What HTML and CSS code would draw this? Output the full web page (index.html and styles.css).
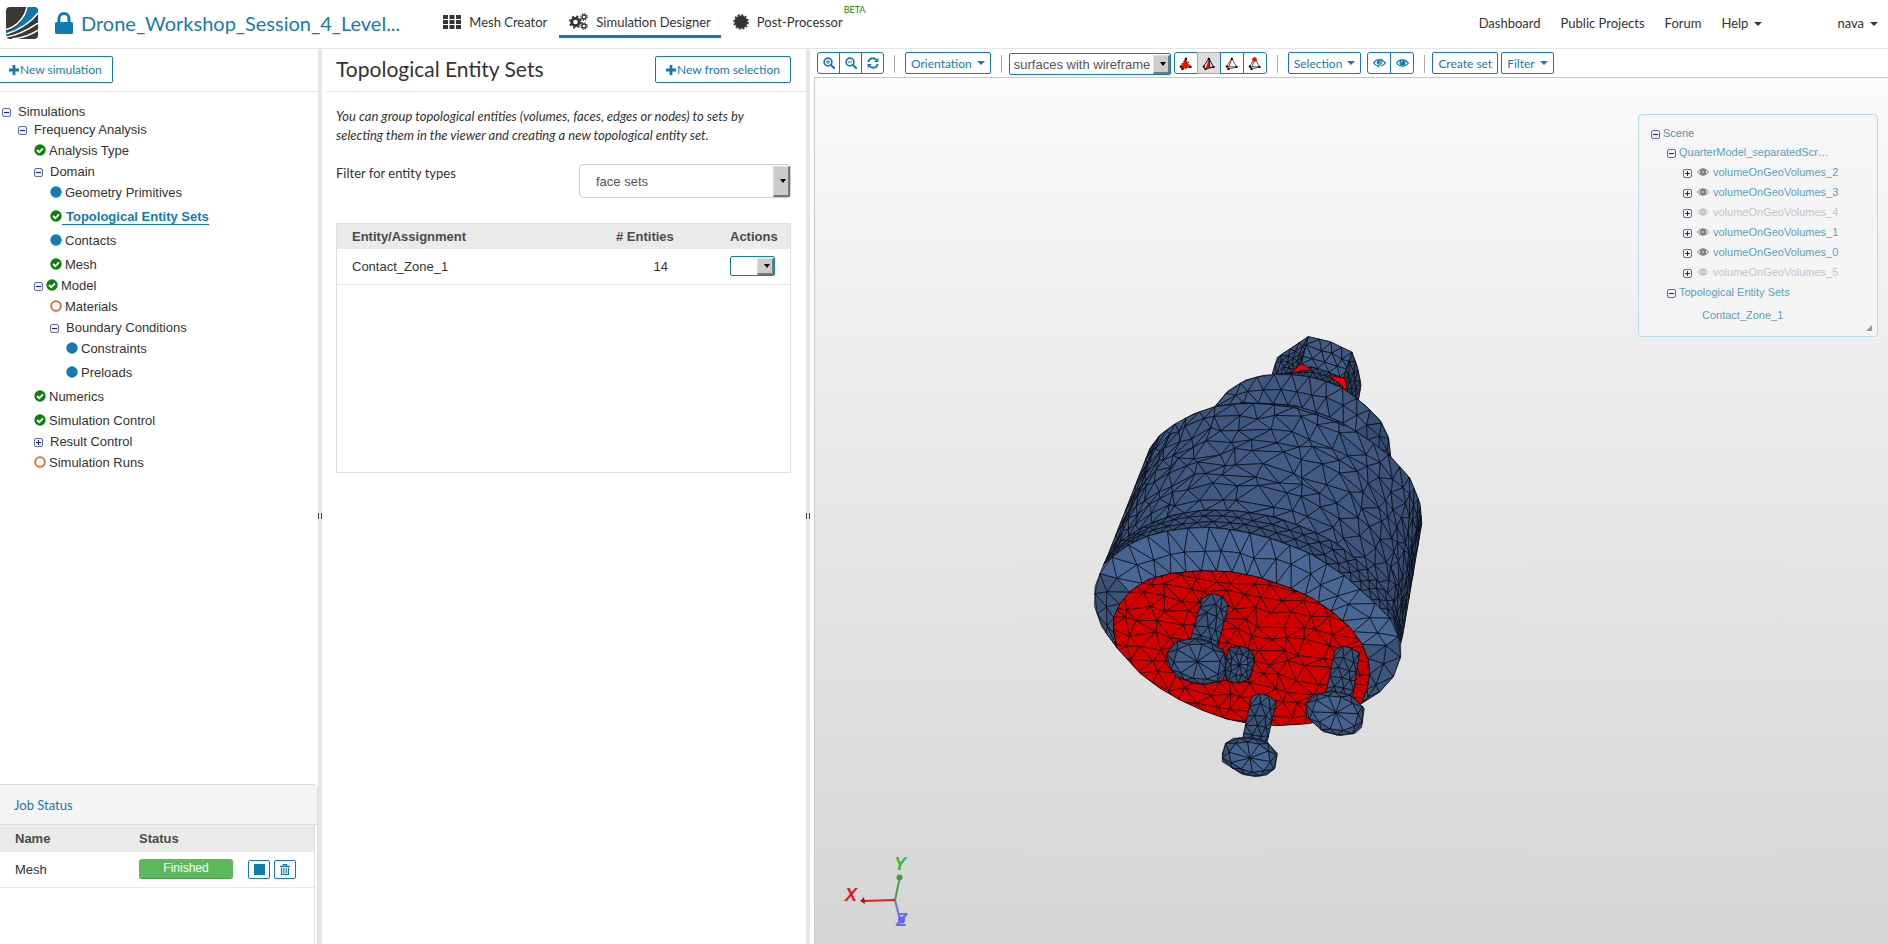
FILE: index.html
```html
<!DOCTYPE html>
<html lang="en">

<head>
    <meta charset="utf-8">
    <meta name="viewport" content="width=device-width, initial-scale=1.0">
    <title>Simulation Designer</title>
    <link rel="stylesheet" href="styles.css">
</head>

<body>
    <!-- icon sprite -->
    <svg class="sprite" aria-hidden="true">
        <symbol id="minus" viewBox="0 0 9 9">
            <rect x=".5" y=".5" width="8" height="8" rx="1.5" fill="#f4f4fa" stroke="#5f6cb0" />
            <path d="M2 4.5h5" stroke="#1414c8" />
        </symbol>
        <symbol id="plus" viewBox="0 0 9 9">
            <rect x=".5" y=".5" width="8" height="8" rx="1.5" fill="#f4f4fa" stroke="#5f6cb0" />
            <path d="M2 4.5h5M4.5 2v5" stroke="#1414c8" />
        </symbol>
        <symbol id="ok" viewBox="0 0 12 12">
            <circle cx="6" cy="6" r="5.7" fill="#0a820a" />
            <path d="M3 6l2.2 2.2L9 4.4" fill="none" stroke="#fff" stroke-width="1.9" />
        </symbol>
        <symbol id="dot" viewBox="0 0 12 12">
            <circle cx="6" cy="6" r="5.7" fill="#147bb0" />
        </symbol>
        <symbol id="ring" viewBox="0 0 12 12">
            <circle cx="6" cy="6" r="4.8" fill="#fff" stroke="#e4602f" stroke-width="1.8" />
        </symbol>
        <symbol id="add" viewBox="0 0 10 10">
            <path d="M3.6 0h2.8v3.6H10v2.8H6.4V10H3.6V6.4H0V3.6h3.6z" fill="currentColor" />
        </symbol>
        <symbol id="eye" viewBox="0 0 14 10">
            <path d="M.7 5C3.8.4 10.2.4 13.3 5 10.2 9.6 3.8 9.6.7 5z" fill="none" stroke="currentColor" stroke-width="1.3" />
            <circle cx="7" cy="4.6" r="3.2" fill="currentColor" />
            <path d="M5.4 4.5A1.6 1.6 0 0 1 7 2.9" fill="none" stroke="#fff" stroke-width=".8" />
        </symbol>
        <symbol id="eye-off" viewBox="0 0 14 10">
            <path d="M5.5 8.3C3.5 7.8 1.8 6.6.7 5 2.8 1.9 6 .9 9 1.8M9.6 2.1C11 2.7 12.3 3.7 13.3 5c-1.2 1.7-2.9 2.9-4.9 3.3" fill="none" stroke="currentColor" stroke-width="1.4" />
            <path d="M4 4.5A2.9 2.9 0 0 1 8 1.9L5.7 6.9A2.9 2.9 0 0 1 4 4.5zM9.7 3.7a2.7 2.7 0 0 1-1.9 3.4z" fill="currentColor" />
            <path d="M9.9.3L5.6 9.7" stroke="currentColor" stroke-width="1.3" />
        </symbol>
        <symbol id="tree-eye" viewBox="0 0 12 8">
            <path d="M.5 4C3.2-.2 8.8-.2 11.5 4 8.8 8.2 3.2 8.2.5 4z" fill="none" stroke="currentColor" />
            <circle cx="6" cy="4" r="2" fill="none" stroke="currentColor" stroke-width="2.4" />
        </symbol>
        <symbol id="zoom-in" viewBox="0 0 12 12">
            <circle cx="5" cy="5" r="3.9" fill="none" stroke="currentColor" stroke-width="1.7" />
            <path d="M8 8l3 3" stroke="currentColor" stroke-width="2.2" stroke-linecap="round" />
            <path d="M3 5h4M5 3v4" stroke="currentColor" />
        </symbol>
        <symbol id="zoom-out" viewBox="0 0 12 12">
            <circle cx="5" cy="5" r="3.9" fill="none" stroke="currentColor" stroke-width="1.7" />
            <path d="M8 8l3 3" stroke="currentColor" stroke-width="2.2" stroke-linecap="round" />
            <path d="M3 5h4" stroke="currentColor" />
        </symbol>
        <symbol id="refresh" viewBox="0 0 12 12">
            <path d="M1.3 5A4.6 4.6 0 0 1 9.4 3M10.7 7A4.6 4.6 0 0 1 2.6 9" fill="none" stroke="currentColor" stroke-width="1.8" />
            <path d="M11.4.8v4.2H7.2zM.6 11.2V7h4.2z" fill="currentColor" />
        </symbol>
        <symbol id="grid" viewBox="0 0 18 14">
            <path d="M0 0h5v4H0zM6.5 0h5v4h-5zM13 0h5v4h-5zM0 5h5v4H0zM6.5 5h5v4h-5zM13 5h5v4h-5zM0 10h5v4H0zM6.5 10h5v4h-5zM13 10h5v4h-5z" fill="currentColor" />
        </symbol>
        <symbol id="cogs" viewBox="0 0 19 17">
            <g fill="none" stroke="currentColor">
                <circle cx="6.5" cy="9" r="3.7" stroke-width="2.8" />
                <circle cx="6.5" cy="9" r="5.6" stroke-width="1.8" stroke-dasharray="2.2" />
                <circle cx="15" cy="4" r="2" stroke-width="1.3" />
                <circle cx="15" cy="4" r="3.2" stroke-width="1.2" stroke-dasharray="1.26" />
                <circle cx="15" cy="13" r="2" stroke-width="1.3" />
                <circle cx="15" cy="13" r="3.2" stroke-width="1.2" stroke-dasharray="1.26" />
            </g>
        </symbol>
        <symbol id="badge" viewBox="0 0 16 16">
            <circle cx="8" cy="8" r="6.5" fill="currentColor" />
            <circle cx="8" cy="8" r="7" fill="none" stroke="currentColor" stroke-width="1.5" stroke-dasharray="2.2 1.465" />
        </symbol>
        <symbol id="trash" viewBox="0 0 10 11">
            <path d="M3.3 2V.7h3.4V2M0 2.3h10" fill="none" stroke="currentColor" stroke-width="1.2" />
            <path d="M1.5 3.5v6.9h7V3.5" fill="none" stroke="currentColor" stroke-width="1.2" />
            <path d="M3.5 4v5M5 4v5M6.5 4v5" stroke="currentColor" stroke-width=".8" />
        </symbol>
        <symbol id="solid" viewBox="0 0 13 13">
            <path d="M7 1.5l5 8.5-9.5 2L1.5 9z" fill="none" stroke="#111" stroke-dasharray="2 1.5" />
            <path d="M6.5 1.5L1.8 10.5l2 1.5L11 10z" fill="#f00" />
            <path d="M5.8.8h2v2h-2zM.8 8.5h2v2h-2zM2.5 11h2v2h-2zM10.5 9h2v2h-2z" />
        </symbol>
        <symbol id="surface" viewBox="0 0 13 13">
            <path d="M7 1.5l4.5 8.5-8 2-2-2.5z" fill="#eee" stroke="#111" />
            <path d="M7 1.5L3.5 12 8 11z" fill="#f00" />
            <path d="M7 1.5L8 11" stroke="#111" />
            <path d="M5.8.8h2v2h-2zM.8 8.5h2v2h-2zM2.5 11h2v2h-2zM10.5 9h2v2h-2z" />
        </symbol>
        <symbol id="edge" viewBox="0 0 13 13">
            <path d="M7 1.5l4.5 8.5-8 2-2-2.5zM1.5 9.5l10 .5" fill="none" stroke="#333" stroke-width=".8" />
            <path d="M6.5 2L3.5 11" stroke="#f00" />
            <path d="M5.8.8h2v2h-2zM.8 8.5h2v2h-2zM2.5 11h2v2h-2zM10.5 9h2v2h-2z" />
        </symbol>
        <symbol id="node" viewBox="0 0 13 13">
            <path d="M7 1.5l4.5 8.5-8 2-2-2.5zM1.5 9.5l10 .5M7 2L3.5 11" fill="none" stroke="#333" stroke-width=".8" />
            <path d="M.8 8.5h2v2h-2zM2.5 11h2v2h-2zM10.5 9h2v2h-2z" />
            <circle cx="6.5" cy="2.5" r="2.3" fill="#f00" />
        </symbol>
    </svg>

    <header class="topbar">
        <svg class="logo" viewBox="0 0 32 32">
            <rect width="32" height="32" rx="4" fill="#3e3835" />
            <path d="M0 25C12 22 20 10 22 0h6a4 4 0 0 1 4 4v3C25 17 13 24 0 28z" fill="#0b78b4" />
            <path d="M0 22.5C11 20 19 10 21 0M0 27C14 23 26 14 32 6M0 30C14 28 26 20 32 16M6 32c10-1 20-5 26-9" fill="none" stroke="#fff" stroke-width="1.5" />
        </svg>
        <a class="project" href="#">
            <svg class="lock" viewBox="0 0 18 22">
                <path d="M4 11V6.5a5 5 0 0 1 10 0V11" fill="none" stroke="currentColor" stroke-width="3" />
                <rect y="10" width="18" height="12" rx="1.5" fill="currentColor" />
            </svg>
            Drone_Workshop_Session_4_Level...
        </a>
        <nav class="tabs">
            <a class="tab" href="#"><svg class="icon-grid"><use href="#grid" /></svg>Mesh Creator</a>
            <a class="tab active" href="#"><svg class="icon-cogs"><use href="#cogs" /></svg>Simulation Designer</a>
            <a class="tab" href="#"><svg class="icon-badge"><use href="#badge" /></svg>Post-Processor<span class="beta">BETA</span></a>
        </nav>
        <nav class="links">
            <a href="#">Dashboard</a>
            <a href="#">Public Projects</a>
            <a href="#">Forum</a>
            <a class="caret" href="#">Help</a>
            <a class="caret user" href="#">nava</a>
        </nav>
    </header>

    <main class="workspace">
        <aside class="sidebar">
            <div class="bar">
                <button class="button first"><svg class="icon-add"><use href="#add" /></svg>New simulation</button>
            </div>
            <ul class="tree">
                <li>
                    <div class="folder"><svg><use href="#minus" /></svg>Simulations</div>
                    <ul>
                        <li>
                            <div class="folder"><svg><use href="#minus" /></svg>Frequency Analysis</div>
                            <ul>
                                <li class="leaf"><svg><use href="#ok" /></svg>Analysis Type</li>
                                <li>
                                    <div class="folder"><svg><use href="#minus" /></svg>Domain</div>
                                    <ul>
                                        <li class="leaf"><svg><use href="#dot" /></svg>Geometry Primitives</li>
                                        <li class="leaf current"><svg><use href="#ok" /></svg><a href="#">Topological Entity Sets</a></li>
                                        <li class="leaf"><svg><use href="#dot" /></svg>Contacts</li>
                                        <li class="leaf"><svg><use href="#ok" /></svg>Mesh</li>
                                    </ul>
                                </li>
                                <li>
                                    <div class="folder with-state"><svg><use href="#minus" /></svg><svg class="state"><use href="#ok" /></svg>Model</div>
                                    <ul>
                                        <li class="leaf"><svg><use href="#ring" /></svg>Materials</li>
                                        <li>
                                            <div class="folder"><svg><use href="#minus" /></svg>Boundary Conditions</div>
                                            <ul>
                                                <li class="leaf"><svg><use href="#dot" /></svg>Constraints</li>
                                                <li class="leaf"><svg><use href="#dot" /></svg>Preloads</li>
                                            </ul>
                                        </li>
                                    </ul>
                                </li>
                                <li class="leaf"><svg><use href="#ok" /></svg>Numerics</li>
                                <li class="leaf"><svg><use href="#ok" /></svg>Simulation Control</li>
                                <li>
                                    <div class="folder"><svg><use href="#plus" /></svg>Result Control</div>
                                </li>
                                <li class="leaf"><svg><use href="#ring" /></svg>Simulation Runs</li>
                            </ul>
                        </li>
                    </ul>
                </li>
            </ul>
            <section class="jobs">
                <h2>Job Status</h2>
                <div class="jobs-body">
                    <table>
                        <thead>
                            <tr>
                                <th class="job-name">Name</th>
                                <th class="job-status">Status</th>
                                <th></th>
                            </tr>
                        </thead>
                        <tbody>
                            <tr>
                                <td>Mesh</td>
                                <td><span class="label">Finished</span></td>
                                <td>
                                    <div class="job-actions">
                                        <button class="small" aria-label="Stop"><span class="stop"></span></button>
                                        <button class="small" aria-label="Delete"><svg class="icon-trash"><use href="#trash" /></svg></button>
                                    </div>
                                </td>
                            </tr>
                        </tbody>
                    </table>
                </div>
            </section>
        </aside>
        <div class="splitter"></div>

        <section class="panel">
            <div class="bar">
                <h1>Topological Entity Sets</h1>
                <button class="button"><svg class="icon-add"><use href="#add" /></svg>New from selection</button>
            </div>
            <div class="panel-body">
                <p class="hint">You can group topological entities (volumes, faces, edges or nodes) to sets by selecting them in the viewer and creating a new topological entity set.</p>
                <div class="field">
                    <label for="types">Filter for entity types</label>
                    <span class="select types"><select id="types">
                            <option>face sets</option>
                        </select></span>
                </div>
                <div class="entities">
                    <table>
                        <thead>
                            <tr>
                                <th>Entity/Assignment</th>
                                <th class="count">#&nbsp;Entities</th>
                                <th class="actions">Actions</th>
                            </tr>
                        </thead>
                        <tbody>
                            <tr>
                                <td>Contact_Zone_1</td>
                                <td class="count number">14</td>
                                <td class="actions"><span class="select action"><select aria-label="Actions">
                                            <option></option>
                                        </select></span></td>
                            </tr>
                        </tbody>
                    </table>
                </div>
            </div>
        </section>
        <div class="splitter"></div>

        <section class="viewer">
            <div class="toolbar">
                <div class="group">
                    <button aria-label="Zoom in"><svg class="icon-tool"><use href="#zoom-in" /></svg></button>
                    <button aria-label="Zoom out"><svg class="icon-tool"><use href="#zoom-out" /></svg></button>
                    <button aria-label="Reset view"><svg class="icon-tool"><use href="#refresh" /></svg></button>
                </div>
                <span class="divider"></span>
                <button class="tool caret">Orientation</button>
                <span class="divider"></span>
                <div class="pair">
                    <span class="select render"><select aria-label="Render mode">
                            <option>surfaces with wireframe</option>
                        </select></span>
                    <div class="group wide">
                        <button aria-label="Pick volumes"><svg class="icon-pick"><use href="#solid" /></svg></button>
                        <button class="pressed" aria-label="Pick faces"><svg class="icon-pick"><use href="#surface" /></svg></button>
                        <button aria-label="Pick edges"><svg class="icon-pick"><use href="#edge" /></svg></button>
                        <button aria-label="Pick nodes"><svg class="icon-pick"><use href="#node" /></svg></button>
                    </div>
                </div>
                <span class="divider"></span>
                <div class="pair eyes">
                    <button class="tool caret">Selection</button>
                    <div class="group wide">
                        <button aria-label="Hide"><svg class="icon-eye"><use href="#eye-off" /></svg></button>
                        <button aria-label="Show"><svg class="icon-eye"><use href="#eye" /></svg></button>
                    </div>
                </div>
                <span class="divider"></span>
                <div class="pair">
                    <button class="tool">Create set</button>
                    <button class="tool caret">Filter</button>
                </div>
            </div>
            <div class="scene">
                <svg id="model" class="model" viewBox="0 0 1200 1440" role="img" aria-label="Meshed model"></svg>

                <svg class="axes" viewBox="0 0 120 100">
                    <path d="M75 60l4.5-21" stroke="#4ba04b" stroke-width="2" />
                    <circle cx="79.5" cy="37.5" r="3" fill="#3f9f3f" />
                    <path d="M75 60l5 20" stroke="#7474e8" stroke-width="2" />
                    <circle cx="81.5" cy="80" r="3.5" fill="#6060f0" />
                    <path d="M75 60l-32 1" stroke="#d42020" stroke-width="2" />
                    <path d="M40 61l4-4 1 7z" fill="#a81a1a" />
                    <text x="25" y="61" fill="#e01818">X</text>
                    <text x="74" y="30" fill="#34c034">Y</text>
                    <text x="76" y="86" fill="#6a6af5">Z</text>
                </svg>

                <div class="scene-tree">
                    <ul>
                        <li>
                            <div class="node root"><svg><use href="#minus" /></svg>Scene</div>
                            <ul>
                                <li>
                                    <div class="node"><svg><use href="#minus" /></svg>QuarterModel_separatedScr…</div>
                                    <ul>
                                        <li class="node"><svg><use href="#plus" /></svg><svg class="eye"><use href="#tree-eye" /></svg>volumeOnGeoVolumes_2</li>
                                        <li class="node"><svg><use href="#plus" /></svg><svg class="eye"><use href="#tree-eye" /></svg>volumeOnGeoVolumes_3</li>
                                        <li class="node hidden"><svg><use href="#plus" /></svg><svg class="eye"><use href="#tree-eye" /></svg>volumeOnGeoVolumes_4</li>
                                        <li class="node"><svg><use href="#plus" /></svg><svg class="eye"><use href="#tree-eye" /></svg>volumeOnGeoVolumes_1</li>
                                        <li class="node"><svg><use href="#plus" /></svg><svg class="eye"><use href="#tree-eye" /></svg>volumeOnGeoVolumes_0</li>
                                        <li class="node hidden"><svg><use href="#plus" /></svg><svg class="eye"><use href="#tree-eye" /></svg>volumeOnGeoVolumes_5</li>
                                    </ul>
                                </li>
                                <li>
                                    <div class="node"><svg><use href="#minus" /></svg>Topological Entity Sets</div>
                                    <ul>
                                        <li class="node set">Contact_Zone_1</li>
                                    </ul>
                                </li>
                            </ul>
                        </li>
                    </ul>
                    <span class="grip"></span>
                </div>
            </div>
        </section>
    </main>
    <script src="model.js"></script>
</body>

</html>
```
FILE: styles.css
```css
* {
    box-sizing: border-box;
}

body {
    margin: 0;
    height: 100vh;
    display: flex;
    flex-direction: column;
    overflow: hidden;
    background: #fff;
    color: #333;
    font-family: "Liberation Sans", Arial, sans-serif;
    font-size: 13px;
}

a {
    color: inherit;
    text-decoration: none;
}

ul {
    list-style: none;
    margin: 0;
    padding: 0;
}

svg {
    flex: none;
}

button {
    font-family: Lato, sans-serif;
    font-size: 12px;
    color: #147bb0;
    background: #fff;
    border: 1px solid #147bb0;
    border-radius: 2px;
    padding: 0;
    display: flex;
    align-items: center;
    justify-content: center;
}

.sprite {
    position: absolute;
    width: 0;
    height: 0;
}

/* top bar */

.topbar {
    display: flex;
    align-items: center;
    height: 49px;
    flex: none;
    padding: 0 10px 2px 6px;
    border-bottom: 1px solid #e4e4e4;
    font-family: Lato, sans-serif;
    font-size: 13px;
}

.logo {
    width: 32px;
    height: 32px;
}

.project {
    display: flex;
    align-items: center;
    gap: 8px;
    margin-left: 17px;
    padding-bottom: 1px;
    color: #147bb0;
    font-size: 20px;
}

.lock {
    width: 18px;
    height: 22px;
}

.tabs {
    display: flex;
    gap: 2px;
    margin-left: 33px;
}

.tab {
    position: relative;
    display: flex;
    align-items: center;
    gap: 8px;
    height: 30px;
    padding: 0 10px;
    border-bottom: 3px solid transparent;
}

.active {
    border-bottom-color: #147bb0;
}

.icon-grid {
    width: 18px;
    height: 14px;
}

.icon-cogs {
    width: 19px;
    height: 17px;
}

.icon-badge {
    width: 16px;
    height: 16px;
}

.beta {
    position: absolute;
    top: -4px;
    left: 100%;
    margin-left: -9px;
    font-size: 9px;
    line-height: 12px;
    color: #0a8a0a;
}

.links {
    display: flex;
    gap: 20px;
    margin-left: auto;
    padding-bottom: 1px;
}

.caret::after {
    content: "";
    display: inline-block;
    margin-left: 6px;
    vertical-align: 2px;
    border: 4px solid transparent;
    border-top-color: currentColor;
    border-bottom: 0;
}

.user {
    margin-left: 55px;
}

/* columns */

.workspace {
    display: flex;
    flex: 1;
    min-height: 0;
}

.sidebar {
    display: flex;
    flex-direction: column;
    width: 318px;
}

.panel {
    width: 484px;
}

.viewer {
    display: flex;
    flex-direction: column;
    flex: 1;
}

.splitter {
    display: flex;
    align-items: center;
    justify-content: center;
    width: 4px;
    background: #e6e6e6;
}

.splitter::after {
    content: "";
    width: 3px;
    height: 6px;
    margin-bottom: -38px;
    border: solid #444;
    border-width: 0 1px;
}

.bar {
    display: flex;
    align-items: center;
    justify-content: space-between;
    height: 43px;
    padding-bottom: 1px;
    border-bottom: 1px solid #e6e6e6;
}

.button {
    height: 27px;
    padding: 0 10px;
    gap: 1px;
}

.first {
    border-left: 0;
    border-radius: 0 2px 2px 0;
    padding-left: 9px;
}

.icon-add {
    width: 10px;
    height: 10px;
}

/* simulation tree */

.tree {
    flex: 1;
    padding: 10px 0 0 2px;
}

.tree ul {
    padding-left: 16px;
}

.folder,
.leaf {
    display: flex;
    align-items: center;
    height: 18px;
}

.folder svg {
    width: 9px;
    height: 9px;
    margin: 3px 7px 0 0;
}

.leaf {
    height: 24px;
}

.leaf svg,
.folder .state {
    width: 12px;
    height: 12px;
    margin: 0 3px 0 0;
}

.with-state svg {
    margin-right: 3px;
}

.current a {
    margin-left: -3px;
    padding: 2px 0 0 4px;
    line-height: 14px;
    font-weight: bold;
    color: #147bb0;
    border-bottom: 1px solid #147bb0;
}

/* jobs */

.jobs {
    height: 160px;
    border: 1px solid #dcdcdc;
    border-width: 1px 1px 0 0;
    border-radius: 0 4px 0 0;
}

.jobs h2 {
    margin: 0;
    padding: 0 14px;
    height: 40px;
    background: #f4f4f4;
    border-bottom: 1px solid #dcdcdc;
    font: 13px/40px Lato, sans-serif;
    color: #147bb0;
}

.jobs-body {
    height: 119px;
    margin-right: 2px;
    border-right: 1px solid #dcdcdc;
}

table {
    width: 100%;
    border-collapse: collapse;
    table-layout: fixed;
}

th {
    height: 27px;
    padding: 0 0 0 15px;
    background: #eaeaea;
    color: #4a4a4a;
    text-align: left;
}

td {
    height: 35px;
    padding: 0 0 0 15px;
    border-bottom: 1px solid #e6e6e6;
}

.job-name {
    width: 124px;
}

.job-status {
    width: 109px;
}

.label {
    display: block;
    height: 20px;
    line-height: 18px;
    border-radius: 3px;
    border-bottom: 1px solid #4a9a4a;
    background: #5cb85c;
    color: #fff;
    text-align: center;
    font-size: 12px;
}

.job-actions {
    display: flex;
    gap: 4px;
}

.small {
    width: 22px;
    height: 19px;
}

.stop {
    width: 11px;
    height: 11px;
    background: #147bb0;
}

.icon-trash {
    width: 10px;
    height: 11px;
}

/* entity sets */

.panel .bar {
    margin-left: 4px;
    padding: 0 15px 1px 10px;
}

h1 {
    margin: 0;
    padding-bottom: 2px;
    font: 21px/26px Lato, sans-serif;
}

.panel-body {
    padding: 15px 15px 0 14px;
}

.hint {
    margin: 0 0 19px;
    font: italic 13px/19px Lato, sans-serif;
}

.field {
    display: flex;
    justify-content: space-between;
    font: 13px/19px Lato, sans-serif;
    margin-bottom: 25px;
}

.select {
    position: relative;
    display: block;
}

.select select {
    appearance: none;
    display: block;
    width: 100%;
    height: 100%;
    margin: 0;
    padding: 0 16px 0 4px;
    background: #fff;
    border: 1px solid #147bb0;
    border-radius: 2px;
    color: #555;
    font: 13px "Liberation Sans", Arial, sans-serif;
}

/* bevelled drop-down knob */
.select::before {
    content: "";
    position: absolute;
    top: 2px;
    right: 1px;
    bottom: 1px;
    width: 14px;
    background: #ccc;
    border: 1px solid #ddd;
    border-right: 2px solid #777;
    border-bottom: 2px solid #777;
    pointer-events: none;
}

.select::after {
    content: "";
    position: absolute;
    top: 50%;
    right: 5px;
    margin-top: -2px;
    border: 3px solid transparent;
    border-top: 4px solid #000;
    border-bottom: 0;
    pointer-events: none;
}

.types {
    width: 212px;
    height: 34px;
}

.types select {
    padding-left: 16px;
    border-color: #ccc;
    border-radius: 4px;
}

.entities {
    height: 250px;
    border: 1px solid #dedede;
}

.entities th {
    height: 25px;
}

.entities .count {
    width: 114px;
    padding: 0;
}

.entities .number {
    padding-right: 62px;
    text-align: right;
}

.entities .actions {
    width: 60px;
    padding: 0;
}

.action {
    width: 45px;
    height: 20px;
}

/* viewer */

.toolbar {
    display: flex;
    align-items: flex-start;
    gap: 10px;
    height: 28px;
    padding: 3px 7px 0;
}

.toolbar button {
    height: 22px;
}

.tool {
    padding: 0 5px;
}

.tool.caret::after {
    margin-left: 5px;
}

.group {
    display: flex;
}

.group button {
    width: 23px;
    margin-left: -1px;
    border-radius: 0;
}

.group button:first-child {
    margin-left: 0;
    border-radius: 3px 0 0 3px;
}

.group button:last-child {
    border-radius: 0 3px 3px 0;
}

.wide button {
    width: 24px;
}

.group .pressed {
    background: #ddd;
    border-color: #aaa;
}

.divider {
    width: 1px;
    height: 18px;
    margin-top: 3px;
    background: #b0a8b0;
}

.pair {
    display: flex;
    gap: 3px;
    margin-left: -3px;
}

.eyes {
    gap: 6px;
    margin-left: 0;
}

.render {
    width: 162px;
    height: 22px;
    margin-top: 1px;
}

.icon-tool {
    width: 12px;
    height: 12px;
}

.icon-pick {
    width: 13px;
    height: 13px;
}

.icon-eye {
    width: 13px;
    height: 10px;
}

.scene {
    position: relative;
    flex: 1;
    margin-left: 4px;
    border: 1px solid #c8c8c8;
    border-width: 1px 0 0 1px;
    background: linear-gradient(#fbfbfb, #eee 30%, #d5d5d5);
    overflow: hidden;
}

.model {
    position: absolute;
    top: 242px;
    left: 245px;
    width: 400px;
    height: 480px;
}

.axes {
    position: absolute;
    left: 5px;
    bottom: 4px;
    width: 120px;
    height: 100px;
    font: italic bold 18px "Liberation Sans", Arial, sans-serif;
}

.scene-tree {
    position: absolute;
    top: 36px;
    right: 10px;
    width: 240px;
    height: 223px;
    padding: 9px 0 0 12px;
    border: 1px solid #b4dce6;
    border-radius: 4px;
    background: rgba(245, 245, 245, .8);
    font-size: 11px;
    color: #5a9fc4;
}

.scene-tree ul ul {
    padding-left: 16px;
}

.node {
    display: flex;
    align-items: center;
    height: 20px;
}

.root {
    height: 18px;
    color: #5b8fae;
}

.node svg {
    width: 9px;
    height: 9px;
    margin: 3px 3px 0 0;
}

.node .eye {
    width: 12px;
    height: 8px;
    margin: 0 4px 0 2px;
    color: #7f8078;
}

.hidden,
.hidden .eye {
    color: #c4c4c4;
}

.set {
    height: 26px;
    padding-left: 19px;
}

.grip {
    position: absolute;
    right: 5px;
    bottom: 5px;
    border: 3px solid #999;
    border-top-color: transparent;
    border-left-color: transparent;
}
```
FILE: model.js
```js
// Draws the triangulated part into #model
const svg = document.querySelector("#model");
const blue = [70, 98, 142];
const red = [212, 0, 0];
let seed = 7;
let target = svg;

function rnd() {
    seed = (seed * 16807) % 2147483647;
    return seed / 2147483647 - 0.5;
}

function add(name, attrs) {
    const el = document.createElementNS("http://www.w3.org/2000/svg", name);
    for (const key in attrs) {
        el.setAttribute(key, attrs[key]);
    }
    target.appendChild(el);
    return el;
}

function list(points) {
    return points.map(p => p[0].toFixed(1) + "," + p[1].toFixed(1)).join(" ");
}

function shape(points, color, shade) {
    const rgb = color.map(c => Math.round(c * shade));
    add("polygon", {
        points: list(points),
        fill: "rgb(" + rgb + ")",
        stroke: "#06090f",
        "stroke-width": 2,
        "stroke-linejoin": "round"
    });
}

// point at t (0..1) of the length of a polyline
function along(line, t) {
    const len = [0];
    for (let i = 1; i < line.length; i++) {
        len.push(len[i - 1] + Math.hypot(line[i][0] - line[i - 1][0], line[i][1] - line[i - 1][1]));
    }
    const d = t * len[len.length - 1];
    let i = 1;
    while (i < line.length - 1 && len[i] < d) i++;
    const f = (d - len[i - 1]) / (len[i] - len[i - 1]);
    return [
        line[i - 1][0] + (line[i][0] - line[i - 1][0]) * f,
        line[i - 1][1] + (line[i][1] - line[i - 1][1]) * f
    ];
}

// triangles between two curves
function band(a, b, rows, cols, o) {
    shape(a.concat(b.slice().reverse()), blue, o.shade(0.5));
    const grid = [];
    for (let r = 0; r <= rows; r++) {
        grid.push([]);
        for (let c = 0; c <= cols; c++) {
            const inside = r > 0 && r < rows;
            let u = c / cols;
            if (c > 0 && c < cols) u += ((r % 2 ? 0.45 : 0) + (inside ? rnd() * o.jitter : 0)) / cols;
            let v = r / rows;
            if (inside) v += rnd() * o.jitter / rows;
            u = Math.min(1, Math.max(0, u));
            // columns get closer towards the silhouette
            const t = u + (o.squeeze || 0) * -Math.sin(2 * Math.PI * u) / (2 * Math.PI);
            const p = along(a, t);
            const q = along(b, t);
            grid[r].push([p[0] + (q[0] - p[0]) * v, p[1] + (q[1] - p[1]) * v]);
        }
    }
    for (let r = 0; r < rows; r++) {
        for (let c = 0; c < cols; c++) {
            const g = [grid[r][c], grid[r][c + 1], grid[r + 1][c + 1], grid[r + 1][c]];
            const s = o.shade(c / cols) + rnd() * 0.04;
            if (r % 2) {
                shape([g[0], g[1], g[2]], blue, s);
                shape([g[0], g[2], g[3]], blue, s + 0.02);
            } else {
                shape([g[0], g[1], g[3]], blue, s);
                shape([g[1], g[2], g[3]], blue, s + 0.02);
            }
        }
    }
}

// flat face: triangle net cut off at the outline
function face(outline, color, dx, dy) {
    const clip = add("clipPath", { id: "face-clip" });
    target = clip;
    add("polygon", { points: list(outline) });
    target = svg;
    target = add("g", { "clip-path": "url(#face-clip)" });
    const xs = outline.map(p => p[0]);
    const ys = outline.map(p => p[1]);
    const x0 = Math.min(...xs) - dx;
    const y0 = Math.min(...ys) - dy * 2;
    const cols = Math.ceil((Math.max(...xs) - x0) / dx) + 1;
    const rows = Math.ceil((Math.max(...ys) - y0) / dy) + 2;
    const grid = [];
    for (let r = 0; r <= rows; r++) {
        grid.push([]);
        for (let c = 0; c <= cols; c++) {
            grid[r].push([
                x0 + (c + (r % 2 ? 0.5 : 0) + rnd() * 0.6) * dx,
                y0 + (r + rnd() * 0.6) * dy + (c - cols / 2) * 7
            ]);
        }
    }
    shape(outline, color, 1);
    for (let r = 0; r < rows; r++) {
        for (let c = 0; c < cols; c++) {
            const g = [grid[r][c], grid[r][c + 1], grid[r + 1][c + 1], grid[r + 1][c]];
            if (r % 2) {
                shape([g[0], g[1], g[2]], color, 1);
                shape([g[0], g[2], g[3]], color, 1);
            } else {
                shape([g[0], g[1], g[3]], color, 1);
                shape([g[1], g[2], g[3]], color, 1);
            }
        }
    }
    target = svg;
    add("polygon", { points: list(outline), fill: "none", stroke: "#06090f", "stroke-width": 2.5 });
}

// closed outline meshed by rings round its centre
function disc(outline, cx, cy, rings, shade) {
    const n = 10;
    const closed = outline.concat([outline[0]]);
    let prev = [];
    for (let i = 0; i < n; i++) prev.push(along(closed, i / n));
    shape(outline, blue, shade * 0.8);
    rings.forEach((k, r) => {
        const next = [];
        for (let i = 0; i < n; i++) {
            const p = along(closed, (i + (r % 2 ? 0 : 0.5)) / n);
            next.push([cx + (p[0] - cx) * k, cy + (p[1] - cy) * k]);
        }
        for (let i = 0; i < n; i++) {
            const j = (i + 1) % n;
            shape([prev[i], prev[j], next[r % 2 ? j : i]], blue, shade * (r ? 1 : 0.82) + rnd() * 0.05);
            shape([next[i], next[j], prev[r % 2 ? i : j]], blue, shade * (r ? 1 : 0.88) + rnd() * 0.05);
        }
        prev = next;
    });
    for (let i = 0; i < n; i++) {
        shape([prev[i], prev[(i + 1) % n], [cx, cy]], blue, shade + rnd() * 0.05);
    }
}

// hexagonal head on top
band([[690, 150], [730, 140], [775, 145], [820, 160], [862, 180]], [[690, 190], [730, 185], [775, 190], [820, 205], [858, 235]], 3, 9, { jitter: 0.2, shade: () => 0.75 });
band([[637, 162], [652, 112], [745, 50]], [[690, 160], [705, 148], [724, 132]], 4, 5, { jitter: 0.3, shade: () => 0.8 });
band([[745, 50], [810, 65], [876, 97]], [[724, 132], [790, 150], [858, 178]], 3, 4, { jitter: 0.4, shade: () => 0.92 });
band([[876, 97], [892, 140], [903, 195], [895, 240]], [[850, 176], [855, 190], [860, 205], [866, 240]], 3, 5, { jitter: 0.3, shade: () => 0.68 });
shape([[690, 160], [724, 132], [760, 152], [730, 150]], red, 1.15);
shape([[805, 166], [855, 175], [862, 216], [838, 190]], red, 1.15);

const capTop = [[465, 260], [505, 212], [557, 180], [610, 166], [680, 162], [760, 172], [840, 198], [915, 255], [960, 300], [985, 350], [992, 410]];
const capLow = [[465, 262], [500, 254], [540, 250], [620, 250], [700, 256], [780, 280], [850, 310], [920, 360], [992, 412]];
band(capTop, capLow, 2, 13, { jitter: 0.3, shade: u => u < 0.75 ? 0.9 : 0.78 });

// cylinder
const bodyTop = [[270, 385], [300, 345], [340, 315], [400, 282], [465, 260], [540, 250], [620, 250], [700, 256], [780, 280], [850, 310], [920, 355], [992, 410], [1050, 475], [1080, 550], [1085, 610]];
const bodyLow = [[140, 715], [180, 665], [260, 615], [340, 585], [430, 570], [530, 572], [640, 590], [740, 625], [830, 670], [920, 745], [1000, 840], [1028, 945]];
band(bodyTop, bodyLow, 9, 23, {
    jitter: 0.7,
    squeeze: 0.5,
    shade: u => u < 0.5 ? 0.82 + u * 0.22 : 0.93 - (u - 0.5) * 0.5
});
add("polyline", { points: "540,248 620,252 700,262 780,288 855,318", fill: "none", stroke: "#06090f", "stroke-width": 3 });

// groove above the chamfer
const rim = [[130, 735], [180, 690], [240, 655], [310, 635], [380, 625], [450, 622], [540, 632], [650, 660], [760, 705], [850, 765], [930, 835], [1000, 905], [1022, 970]];
band(bodyLow, rim, 3, 25, { jitter: 0.25, squeeze: 0.2, shade: () => 0.8 });

// chamfer
const outer = [[175, 988], [125, 920], [104, 860], [105, 800]].concat(rim, [[1022, 1010], [1000, 1070], [960, 1115], [905, 1150]]);
const inner = [[172, 985], [160, 930], [162, 890], [180, 850], [215, 810], [265, 778], [335, 760], [420, 752], [510, 755], [590, 770], [680, 800], [755, 833], [820, 878], [870, 922], [905, 970], [925, 1020], [929, 1060], [922, 1105], [905, 1150]];
band(outer, inner, 2, 25, { jitter: 0.4, shade: u => u < 0.15 || u > 0.8 ? 0.84 : 1.03 });

// contact face
const low = [[172, 985], [240, 1060], [300, 1105], [360, 1140], [430, 1172], [500, 1197], [570, 1211], [650, 1217], [745, 1211], [830, 1190], [905, 1150]];
face(inner.concat(low.slice().reverse()), red, 56, 38);

// screws
const shaft = () => 0.82;
band([[427, 835], [455, 820], [488, 830], [505, 855]], [[388, 970], [415, 975], [445, 980], [470, 990]], 5, 3, { jitter: 0.4, shade: shaft });
disc([[320, 1000], [345, 965], [400, 955], [440, 960], [490, 990], [502, 1030], [490, 1080], [440, 1094], [400, 1090], [350, 1070], [322, 1035]], 412, 1025, [0.78], 0.95);
disc([[505, 985], [540, 978], [575, 990], [584, 1020], [570, 1075], [540, 1090], [500, 1082], [495, 1045]], 538, 1035, [0.6], 0.88);
band([[825, 990], [850, 978], [875, 985], [898, 1000]], [[796, 1130], [825, 1135], [850, 1138], [876, 1140]], 5, 3, { jitter: 0.4, shade: shaft });
disc([[738, 1150], [760, 1125], [815, 1112], [870, 1125], [913, 1165], [905, 1222], [885, 1240], [840, 1247], [790, 1235], [740, 1190]], 828, 1178, [0.8], 0.98);
band([[575, 1130], [600, 1120], [625, 1127], [648, 1145]], [[545, 1270], [570, 1273], [595, 1275], [618, 1280]], 5, 3, { jitter: 0.4, shade: shaft });
disc([[497, 1270], [520, 1255], [570, 1252], [620, 1265], [652, 1300], [645, 1345], [620, 1365], [585, 1370], [545, 1362], [487, 1325], [487, 1300]], 570, 1314, [0.78], 0.98);
```
